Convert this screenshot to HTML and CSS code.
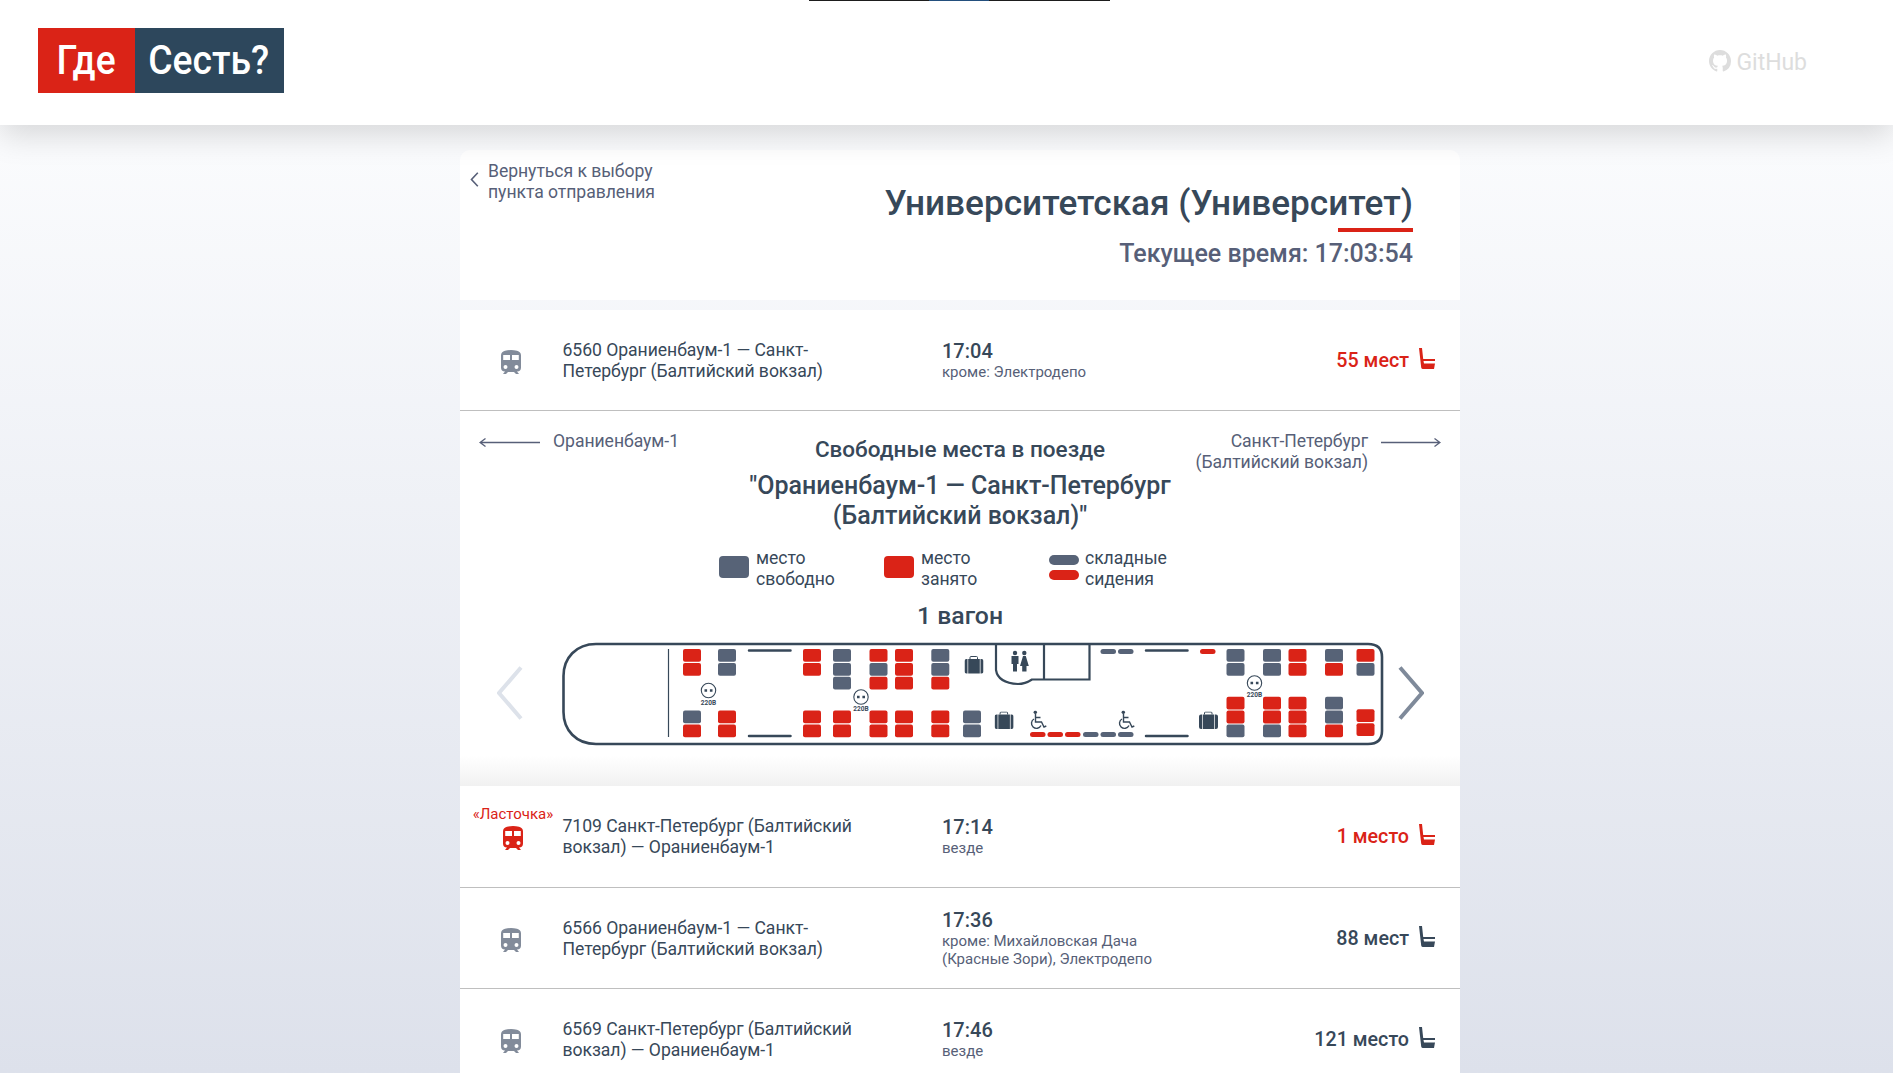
FILE: index.html
```
<!DOCTYPE html>
<html lang="ru">
<head>
<meta charset="utf-8">
<title>Где Сесть?</title>
<link rel="stylesheet" href="styles.css">
</head>
<body>
<svg class="sprite" aria-hidden="true">
  <symbol id="train" viewBox="0 0 20 24"><path fill-rule="evenodd" d="M4 0.8Q10-.8 16 .8Q20 1.8 20 5.5V17.5Q20 21.3 16 21.5L18 24H15L13 22H7L5 24H2L4 21.500Q0 21.300 0 17.500V5.500Q0 1.800 4 .800ZM2.200 5V10H9V5ZM11 5V10H17.800V5ZM4.500 15A2 2 0 1 0 4.500 19A2 2 0 1 0 4.500 15ZM15.500 15A2 2 0 1 0 15.500 19A2 2 0 1 0 15.500 15Z"/></symbol>
  <symbol id="seat" viewBox="0 0 16 21"><path d="M0 0H3L4.200 11H16V13H4.500L5 15.500H16L15 21H4Q2.500 21 2.200 19.500Z"/></symbol>
  <symbol id="bag" viewBox="0 0 19 18"><path d="M5.500 3V1.500Q5.500 .5 6.500 .5H12Q13 .5 13 1.500V3" fill="none" stroke="#374859" stroke-width="1"/><path d="M2 3H3V17.500H2Q0 17.500 0 15.500V5Q0 3 2 3ZM3.700 3H15.300V17.500H3.700ZM16 3H17Q19 3 19 5V15.500Q19 17.500 17 17.500H16Z"/></symbol>
  <symbol id="socket" viewBox="0 0 18 18"><circle cx="9" cy="9" r="7.200" fill="none" stroke="#374859" stroke-width="1.100"/><path d="M5 7.800H7.600V10.300H5ZM10.400 7.800H13V10.300H10.400Z"/></symbol>
  <symbol id="wheel" viewBox="0 0 17 19"><circle cx="5.300" cy="1.700" r="1.700"/><path d="M5.500 3V11.500H11.500L14 16.500L16.300 15.500M5.500 7H10.500M4 8.500A5 5 0 1 0 11 15" fill="none" stroke="#374859" stroke-width="1.400"/></symbol>
</svg>
<header class="header">
  <i class="tab"></i>
  <a class="logo"><span class="logo-red"><b>Где</b></span><span class="logo-blue"><b>Сесть?</b></span></a>
  <a class="github"><svg width="22" height="22" viewBox="0 0 16 16"><path d="M8 0C3.580 0 0 3.580 0 8c0 3.540 2.290 6.530 5.470 7.590.4.070.550-.170.550-.380 0-.190-.010-.820-.010-1.490-2.010.370-2.530-.490-2.690-.940-.090-.230-.480-.940-.820-1.130-.280-.150-.680-.520-.010-.530.630-.010 1.080.580 1.230.820.720 1.210 1.870.870 2.330.660.070-.520.280-.870.510-1.070-1.780-.200-3.640-.890-3.640-3.950 0-.870.310-1.590.820-2.150-.080-.200-.360-1.020.080-2.120 0 0 .670-.210 2.200.820.640-.180 1.320-.270 2-.270s1.360.090 2 .270c1.530-1.040 2.200-.820 2.200-.820.440 1.100.160 1.920.080 2.120.510.560.820 1.270.820 2.150 0 3.070-1.870 3.750-3.650 3.950.290.250.540.730.540 1.480 0 1.070-.010 1.930-.010 2.200 0 .210.150.460.550.380A8.010 8.010 0 0 0 16 8c0-4.420-3.580-8-8-8z"/></svg>GitHub</a>
</header>
<main class="page">
  <section class="station">
    <a class="back"><svg width="9" height="15" viewBox="0 0 9 15"><path d="M7.800 .8L1.500 7.500L7.800 14.200"/></svg><span>Вернуться к выбору<br>пункта отправления</span></a>
    <div class="station-info"><h1>Университетская (Университет)</h1><p>Текущее время: 17:03:54</p></div>
  </section>
  <article class="trip low">
    <div class="kind"><svg width="20" height="24"><use href="#train"/></svg></div>
    <div class="route">6560 Ораниенбаум-1 — Санкт-Петербург (Балтийский вокзал)</div>
    <div class="when"><b>17:04</b><small>кроме: Электродепо</small></div>
    <div class="seats">55 мест<svg width="16" height="21"><use href="#seat"/></svg></div>
  </article>
  <section class="details">
    <div class="ends">
      <div class="end"><svg width="61" height="9" viewBox="0 0 61 9"><path d="M61 4.500H1M6.500 .5L1 4.500L6.500 8.500"/></svg><span>Ораниенбаум-1</span></div>
      <h2>Свободные места в поезде<strong>"Ораниенбаум-1 — Санкт-Петербург (Балтийский вокзал)"</strong></h2>
      <div class="end right"><span>Санкт-Петербург<br>(Балтийский вокзал)</span><svg width="60" height="9" viewBox="0 0 60 9"><path d="M0 4.500H59M53.500 .5L59 4.500L53.500 8.500"/></svg></div>
    </div>
    <div class="legend">
      <div><i class="box"></i><span>место<br>свободно</span></div>
      <div><i class="box taken"></i><span>место<br>занято</span></div>
      <div><span class="pills"><i></i><i class="taken"></i></span><span>складные<br>сидения</span></div>
    </div>
    <h3>1 вагон</h3>
    <div class="carriage">
      <svg class="arrow prev" width="26" height="54" viewBox="0 0 26 54"><path d="M24 1.500L2 27L24 52.500"/></svg>
      <svg class="plan" width="822" height="104" viewBox="0 0 822 104">
        <path class="hull" d="M34 2H806Q820 2 820 15V89Q820 102 806 102H34C14 102 1.500 88 1.500 70V34C1.500 16 14 2 34 2Z"/>
        <path class="wall" d="M106.500 7V95"/>
        <path class="door" d="M187 8.500H228.500M187 94H228.500M584 8.500H625.500M584 94H625.500"/>
        <path class="hull thin" d="M434 2V28Q436 41 456 42Q463 42 470 37.500H527.500V2M482 2V37.500"/>
        <g id="seatmap"></g>
        <use href="#bag" x="402.500" y="14" width="19" height="18"/><use href="#bag" x="432.600" y="69.500" width="19" height="18"/><use href="#bag" x="637" y="69.500" width="19" height="18"/>
        <use href="#socket" x="137.500" y="39.500" width="18" height="18"/><use href="#socket" x="290" y="46" width="18" height="18"/><use href="#socket" x="683.500" y="32" width="18" height="18"/>
        <g class="volts"><text x="146.500" y="62.500">220В</text><text x="299" y="69">220В</text><text x="692.500" y="55">220В</text></g>
        <use href="#wheel" x="468" y="68.500" width="17" height="19"/><use href="#wheel" x="556" y="68.500" width="17" height="19"/>
        <circle cx="453" cy="11" r="2.200"/><circle cx="462.300" cy="11" r="2.200"/><path d="M449.500 14H456.500V22H455V29.500H451V22H449.500ZM461 14H463.800L466.800 24H464.500V29.500H460.200V24H458Z"/>
      </svg>
      <svg class="arrow" width="26" height="54" viewBox="0 0 26 54"><path d="M2 1.500L24 27L2 52.500"/></svg>
    </div>
  </section>
  <article class="trip low tall">
    <div class="kind fast"><span>«Ласточка»</span><svg width="20" height="24"><use href="#train"/></svg></div>
    <div class="route">7109 Санкт-Петербург (Балтийский вокзал) — Ораниенбаум-1</div>
    <div class="when"><b>17:14</b><small>везде</small></div>
    <div class="seats">1 место<svg width="16" height="21"><use href="#seat"/></svg></div>
  </article>
  <article class="trip">
    <div class="kind"><svg width="20" height="24"><use href="#train"/></svg></div>
    <div class="route">6566 Ораниенбаум-1 — Санкт-Петербург (Балтийский вокзал)</div>
    <div class="when"><b>17:36</b><small>кроме: Михайловская Дача (Красные Зори), Электродепо</small></div>
    <div class="seats">88 мест<svg width="16" height="21"><use href="#seat"/></svg></div>
  </article>
  <article class="trip">
    <div class="kind"><svg width="20" height="24"><use href="#train"/></svg></div>
    <div class="route">6569 Санкт-Петербург (Балтийский вокзал) — Ораниенбаум-1</div>
    <div class="when"><b>17:46</b><small>везде</small></div>
    <div class="seats">121 место<svg width="16" height="21"><use href="#seat"/></svg></div>
  </article>
</main>
<script src="seats.js"></script>
</body>
</html>
```
FILE: seats.js
```
// Columns of seats: [x, y of the first seat, states]; r = taken, g = free
const columns = [
  [121,7,'rr'],[156,7,'gg'],[241,7,'rr'],[271,7,'ggg'],[307.5,7,'rgr'],[333,7,'rrr'],[369.300,7,'ggr'],
  [664.500,7,'gg'],[701,7,'gg'],[726.500,7,'rr'],[763,7,'gr'],[794.500,7,'rg'],
  [121,68.500,'gr'],[156,68.500,'rr'],[241,68.500,'rr'],[271,68.500,'rr'],[307.500,68.500,'rr'],[333,68.500,'rr'],[369.300,68.500,'rr'],[401,68.500,'gg'],
  [664.500,54.700,'rrg'],[701,54.700,'rrg'],[726.500,54.700,'rrr'],[763,54.700,'ggr'],[794.500,67.300,'rr']
];
// Folding seats: [x, y, state]
const folding = [[538.500,7,'g'],[556,7,'g'],[638,7,'r'],[468,90,'r'],[485.500,90,'r'],[503,90,'r'],[521,90,'g'],[538.500,90,'g'],[556,90,'g']];
const map = document.getElementById('seatmap');
function add(x, y, w, h, r, state) {
  const e = document.createElementNS('http://www.w3.org/2000/svg', 'rect');
  for (const [k, v] of Object.entries({ x, y, width: w, height: h, rx: r })) e.setAttribute(k, v);
  e.setAttribute('class', state === 'r' ? 'occupied' : 'free');
  map.append(e);
}
columns.forEach(([x, y, s]) => [...s].forEach((c, i) => add(x, y + i * 13.900, 18, 12.800, 2, c)));
folding.forEach(([x, y, c]) => add(x, y, 15.500, 5, 2.500, c));
```
FILE: styles.css
```
* { box-sizing: border-box; }
body { margin: 0; height: 1073px; overflow: hidden; font-family: Roboto, sans-serif; font-size: 17.600px; letter-spacing: -.05px; line-height: 21px; color: #374859; background: linear-gradient(#fff 0, #fafbfd 150px, #dde1eb 1073px); }
.sprite { position: absolute; width: 0; height: 0; }
.header { position: relative; height: 125px; padding: 28px 86px 0 38px; display: flex; justify-content: space-between; align-items: flex-start; background: #fff; box-shadow: 0 10px 30px rgba(0,0,0,.15); }
.tab { position: absolute; top: 0; left: 809px; width: 301px; height: 1px; background: linear-gradient(90deg, #1d1d1d 120px, #234f7d 120px 180px, #1d1d1d 180px); }
.logo { display: flex; height: 65px; color: #fff; font: 500 40.500px/65px Roboto, sans-serif; letter-spacing: 0; }
.logo span { display: flex; justify-content: center; }
.logo b { font-weight: 500; transform: scaleX(.92); }
.logo-red { width: 97px; background: #da2317; }
.logo-blue { width: 149px; padding-right: 2px; background: #2d475c; }
.github { display: flex; align-items: center; gap: 6px; height: 24px; margin-top: 22px; font-size: 23px; color: #ddd; }
.github svg { fill: #ddd; margin-top: -3px; }
.page { width: 1000px; margin: 25px 0 0 460px; }
.station { height: 150px; margin-bottom: 10px; padding: 11px 47px 0 10px; display: flex; justify-content: space-between; background: #fff; border-radius: 10px 10px 0 0; color: #575f78; }
.back { display: flex; gap: 9px; align-items: flex-start; }
.back svg { margin-top: 11px; fill: none; stroke: #575f78; stroke-width: 1.600; }
.station-info { text-align: right; padding-top: 19px; letter-spacing: 0; }
h1, h2, h3, p { margin: 0; font-weight: 500; letter-spacing: 0; }
h1 { font-size: 35.200px; line-height: 46px; color: #374859; }
h1::after { content: ""; display: block; width: 75px; height: 4px; margin: 2px 0 0 auto; background: #da2317; }
.station-info p { margin-top: 7px; font-size: 25px; line-height: 29px; }
.trip { height: 101px; display: flex; align-items: center; background: #fff; border-bottom: 1px solid #bfbfbf; }
.trip.tall { height: 102px; }
.kind { width: 102.500px; padding: 3px 0 0 41px; fill: #828b9a; }
.kind svg { display: block; }
.kind.fast { padding: 0; display: flex; flex-direction: column; align-items: center; margin: -19px 1.500px 0 0; width: 101px; padding-left: 5px; color: #da2317; fill: #da2317; font-size: 15px; letter-spacing: 0; gap: 1px; }
.route { width: 300px; margin-right: 79.500px; padding-top: 2px; }
.tall .route { padding-top: 0; }
.when { width: 240px; display: flex; flex-direction: column; padding-top: 2px; letter-spacing: 0; }
.when b { font-size: 20px; line-height: 20px; padding-bottom: 2px; font-weight: 500; }
.when small { font-size: 15px; line-height: 18px; color: #575f78; }
.tall .when { padding-top: 1px; }
.seats { flex: 1; padding-right: 25px; display: flex; justify-content: flex-end; align-items: center; gap: 10px; font-size: 19.700px; letter-spacing: 0; font-weight: 500; fill: #374859; }
.seats svg { margin-top: -4px; }
.low .seats { color: #da2317; fill: #da2317; }
.details { height: 375px; padding-top: 20px; background: #fff linear-gradient(#fff 345px, #f1f1f1); }
.ends { display: flex; justify-content: space-between; padding: 0 19px; color: #575f78; }
.end { width: 247px; display: flex; gap: 13px; white-space: nowrap; }
.end svg { flex: none; margin-top: 7px; fill: none; stroke: #575f78; stroke-width: 1.300; }
.end.right { justify-content: flex-end; text-align: right; }
h2 { flex: none; width: 440px; padding-top: 5px; text-align: center; font-size: 22.500px; line-height: 26px; color: #374859; }
h2 strong { display: block; margin-top: 9px; font-size: 25px; line-height: 30px; font-weight: 500; }
.legend { display: flex; margin: 18px 0 0 259px; }
.legend > div { width: 165px; display: flex; gap: 7px; line-height: 21px; margin-top: -1px; }
.box { width: 30px; height: 22px; margin-top: 8px; border-radius: 4px; background: #576377; }
.pills { display: flex; flex-direction: column; gap: 5px; padding-top: 7px; margin-right: -1px; }
.pills i { width: 30px; height: 10px; border-radius: 5px; background: #576377; }
i.taken { background: #da2317; }
h3 { margin-top: 12px; text-align: center; font-size: 24.800px; line-height: 28px; }
.carriage { display: flex; align-items: center; margin: 11px 0 0 36.500px; }
.arrow { fill: none; stroke: #7f8a9a; stroke-width: 4; margin: -2px 0 0 13.500px; }
.arrow.prev { stroke: #dde2ea; margin: -2px 39.500px 0 0; }
.plan { margin-top: 1px; fill: #374859; }
.hull { fill: none; stroke: #374859; stroke-width: 2.600; }
.hull.thin { stroke-width: 2.200; }
.wall { stroke: #374859; stroke-width: 1.200; }
.door { stroke: #374859; stroke-width: 2.500; stroke-linecap: round; }
.volts { font-size: 6.500px; font-weight: 700; letter-spacing: 0; text-anchor: middle; }
.free { fill: #576377; }
.occupied { fill: #da2317; }
```
